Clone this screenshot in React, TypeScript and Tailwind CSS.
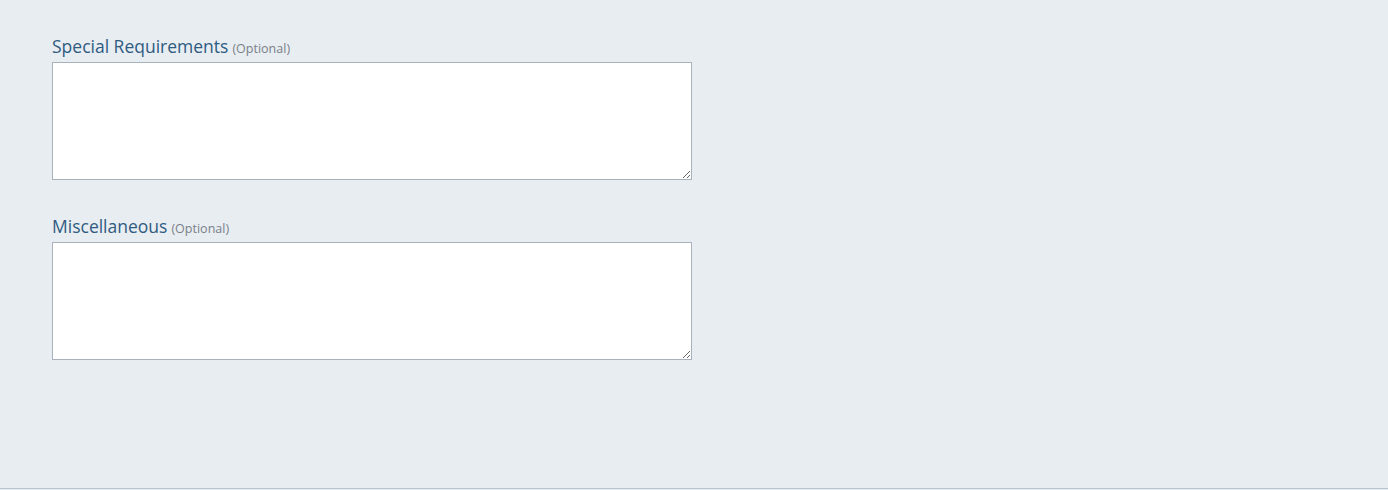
const Field = ({ label }: { label: string }) => (
  <div className="flex flex-col">
    <label className="flex items-baseline gap-1 h-6 leading-[17px]">
      <span className="text-[17.5px] text-[#2f5b80]">{label}</span>
      <span className="text-[12.5px] text-[#7a8088]">(Optional)</span>
    </label>
    <textarea className="w-[640px] h-[118px] bg-white border border-[#a9b2bc] resize-y outline-none" />
  </div>
);

const App = () => {
  return (
    <div
      className="min-h-[490px] bg-[#e8edf2] flex flex-col"
      style={{ fontFamily: '"Open Sans", "Noto Sans", sans-serif' }}
    >
      <div className="flex-1 pt-[38px] pl-[52px] flex flex-col gap-[38px]">
        <Field label="Special Requirements" />
        <Field label="Miscellaneous" />
      </div>
      <div className="h-px bg-[#b7c3cf] mb-px" />
    </div>
  );
};

export default App;
